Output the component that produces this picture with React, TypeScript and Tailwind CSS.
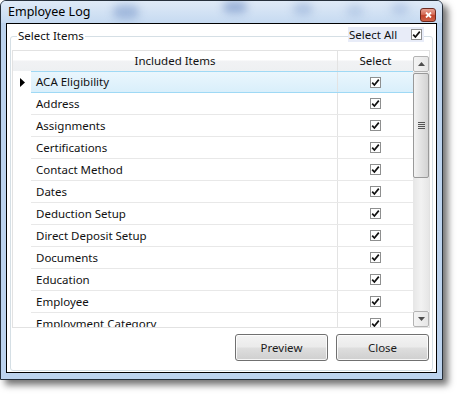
const items = [
  "ACA Eligibility",
  "Address",
  "Assignments",
  "Certifications",
  "Contact Method",
  "Dates",
  "Deduction Setup",
  "Direct Deposit Setup",
  "Documents",
  "Education",
  "Employee",
  "Employment Category",
];

const CheckBox = () => (
  <span className="flex h-[11px] w-[11px] items-center justify-center border border-[#8e8f8f] bg-white">
    <svg width="9" height="9" viewBox="0 0 9 9">
      <path d="M1.2 4.6 L3.4 7 L7.8 1.6" stroke="#111" strokeWidth="1.7" fill="none" />
    </svg>
  </span>
);

const WinButton = ({ label }: { label: string }) => (
  <button className="flex h-[27px] w-[93px] items-center justify-center rounded-[3px] border border-[#707070] bg-[linear-gradient(#f3f3f3,#ebebeb_48%,#dedede_52%,#cfcfcf)] text-[11.5px] text-[#1b1b1b] shadow-[inset_0_0_0_1px_rgba(255,255,255,0.8)]">
    {label}
  </button>
);

const ScrollArrow = ({ up }: { up?: boolean }) => (
  <div className="flex h-[16px] w-[16px] items-center justify-center rounded-[2px] border border-[#b3b3b3] bg-[linear-gradient(90deg,#f4f4f4,#e6e6e6)]">
    <svg width="7" height="4" viewBox="0 0 7 4">
      <path d={up ? "M0 4 L3.5 0 L7 4 Z" : "M0 0 L3.5 4 L7 0 Z"} fill="#4d4d4d" />
    </svg>
  </div>
);

export default function App() {
  return (
    <div className="h-[396px] w-[458px] overflow-hidden bg-white font-['Noto_Sans',sans-serif] text-[11.5px] text-[#111]">
      <div className="relative flex h-[380px] w-[443px] flex-col overflow-hidden rounded-t-[6px] border border-[#26303c] bg-[#bcd3ee] shadow-[5px_5px_7px_rgba(0,0,0,0.55)]">
        {/* title bar */}
        <div className="relative flex h-[22px] items-center overflow-hidden bg-[linear-gradient(#dfeaf7,#c6daf1)] pl-[7px] pr-[6px]">
          <div className="absolute left-[112px] top-[4px] h-[14px] w-[26px] rounded-full bg-[#7f9ccc] opacity-60 blur-[4px]" />
          <div className="absolute left-[222px] top-[0px] h-[12px] w-[24px] rounded-full bg-[#6f8ec4] opacity-60 blur-[4px]" />
          <div className="absolute left-[292px] top-[2px] h-[12px] w-[20px] rounded-full bg-[#8aa6d2] opacity-50 blur-[4px]" />
          <div className="absolute left-[345px] top-[4px] h-[12px] w-[18px] rounded-full bg-[#a0b8dc] opacity-50 blur-[4px]" />
          <div className="absolute left-[390px] top-[2px] h-[12px] w-[18px] rounded-full bg-[#9ab3da] opacity-50 blur-[4px]" />
          <span className="relative flex-1 text-[12.5px] text-black">Employee Log</span>
          <div className="relative mt-[5px] flex h-[14px] w-[16px] items-center justify-center rounded-[3px] border border-[#6b2a20] bg-[linear-gradient(#e9a294,#d46c57_45%,#c2432b_55%,#cf6248)]">
            <svg width="7" height="6" viewBox="0 0 7 6">
              <path d="M1 0.5 L6 5.5 M6 0.5 L1 5.5" stroke="#fff" strokeWidth="1.8" />
            </svg>
          </div>
        </div>

        {/* client area */}
        <div className="mx-[5px] flex h-[350px] flex-col border border-black bg-white px-[3px] pb-px pt-[12px]">
          <div className="relative flex flex-1 flex-col rounded-[3px] border border-[#d5dfe5]">
            <span className="absolute left-[6px] top-[-9px] bg-white px-px leading-[16px]">Select Items</span>
            <div className="absolute left-[337px] top-[-10px] flex h-[15px] w-[76px] items-center justify-between bg-[#e8ecf8] pl-[1px] pr-[2px]">
              <span className="leading-[15px]">Select All</span>
              <CheckBox />
            </div>

            {/* grid */}
            <div className="ml-px mt-[13px] flex h-[278px] w-[418px] overflow-hidden border border-[#e2e2e2]">
              <div className="flex w-[400px] flex-col">
                <div className="flex h-[20px] shrink-0 bg-[linear-gradient(#ffffff,#ffffff_45%,#f1f2f4_50%,#eef0f2)]">
                  <div className="flex w-[324px] items-center justify-center">Included Items</div>
                  <div className="flex flex-1 items-center justify-center border-l border-[#e3e3e3]">Select</div>
                </div>
                {items.map((item, i) => {
                  const sel = i === 0;
                  return (
                    <div key={item} className="flex h-[22px] shrink-0">
                      <div className="flex w-[18px] items-center justify-center">
                        {sel && (
                          <svg width="5" height="9" viewBox="0 0 5 9">
                            <path d="M0 0 L5 4.5 L0 9 Z" fill="#000" />
                          </svg>
                        )}
                      </div>
                      <div
                        className={
                          sel
                            ? "flex flex-1 border-y border-[#9fd9f5] bg-[linear-gradient(#eaf6fd,#d9effb)]"
                            : "flex flex-1 border-b border-[#e8e8e8]"
                        }
                      >
                        <div className="flex w-[306px] items-center pl-[5px]">{item}</div>
                        <div className="flex flex-1 items-center justify-center border-l border-[#e3e3e3]">
                          <CheckBox />
                        </div>
                      </div>
                    </div>
                  );
                })}
              </div>

              {/* scrollbar */}
              <div className="flex w-[16px] flex-col pt-[5px]">
                <ScrollArrow up />
                <div className="flex flex-1 flex-col bg-[linear-gradient(90deg,#e6e6e6,#f2f2f2,#e6e6e6)] pt-px">
                  <div className="flex h-[105px] items-center justify-center rounded-[2px] border border-[#999] bg-[linear-gradient(90deg,#f3f3f3,#e2e2e2_50%,#d2d2d2)]">
                    <svg width="7" height="8" viewBox="0 0 7 8">
                      <path d="M0 0.5 H7 M0 2.5 H7 M0 4.5 H7 M0 6.5 H7" stroke="#555" strokeWidth="1" />
                    </svg>
                  </div>
                </div>
                <ScrollArrow />
              </div>
            </div>

            {/* buttons */}
            <div className="mr-[3px] mt-[6px] flex justify-end gap-[8px]">
              <WinButton label="Preview" />
              <WinButton label="Close" />
            </div>
          </div>
        </div>
      </div>
    </div>
  );
}
